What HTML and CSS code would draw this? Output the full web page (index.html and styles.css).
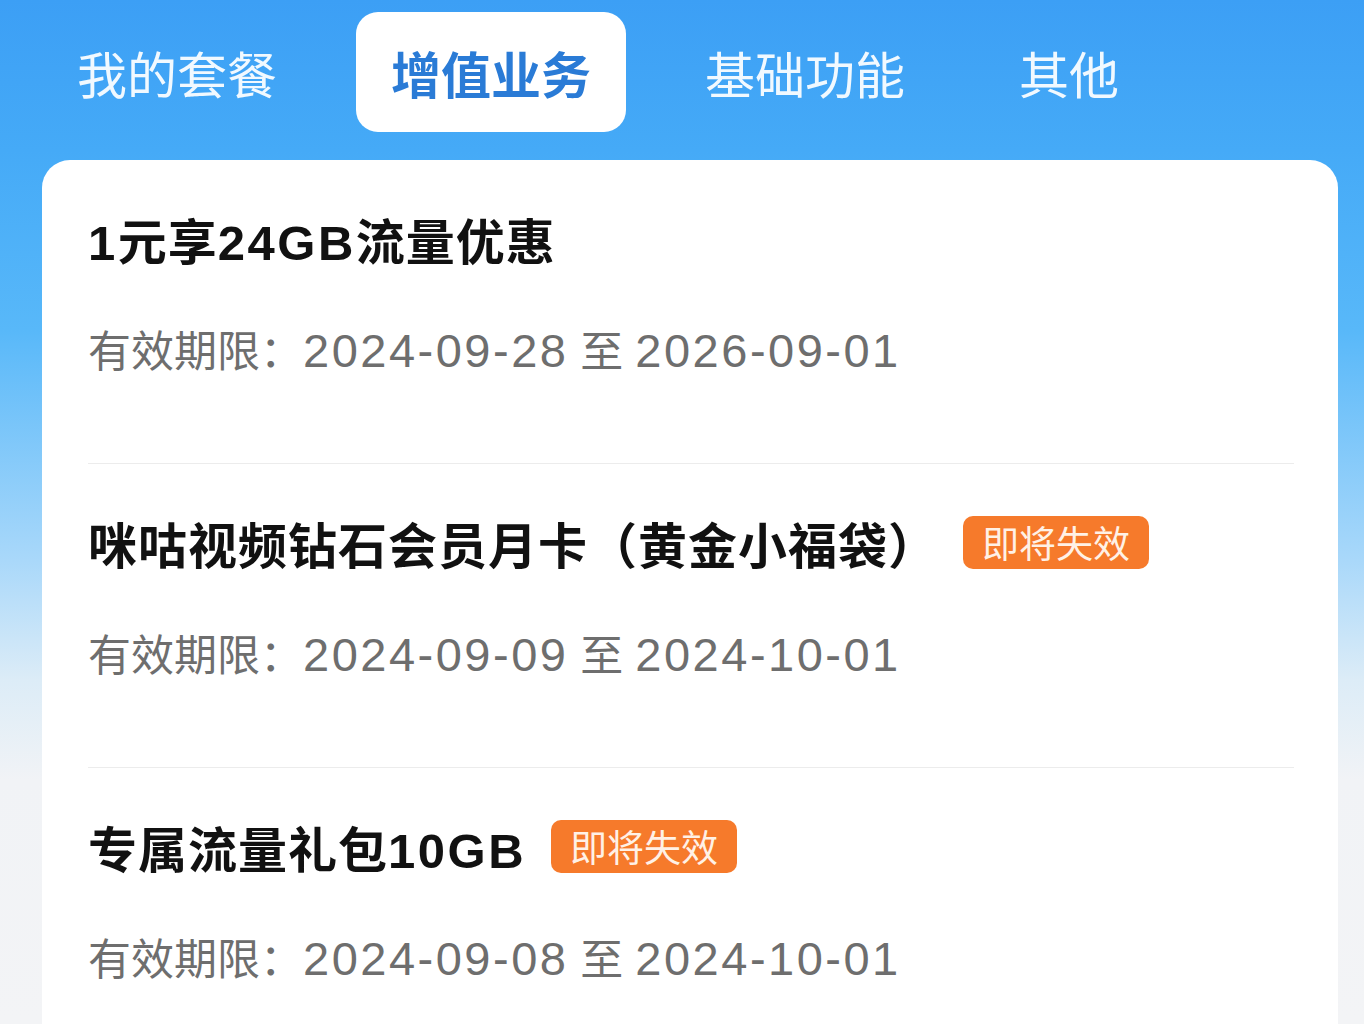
FILE: index.html
```html
<!DOCTYPE html>
<html lang="zh-CN">
<head>
<meta charset="utf-8">
<title>增值业务</title>
<link rel="stylesheet" href="styles.css">
</head>
<body>
<div class="page">
  <nav class="tabs">
    <div class="tab">我的套餐</div>
    <div class="tab tab-active">增值业务</div>
    <div class="tab">基础功能</div>
    <div class="tab">其他</div>
  </nav>
  <section class="card">
    <div class="item">
      <div class="title-row"><span class="title"><span class="en">1</span>元享<span class="en">24GB</span>流量优惠</span></div>
      <div class="date">有效期限：<span class="num">2024-09-28</span> 至 <span class="num">2026-09-01</span></div>
    </div>
    <div class="item">
      <div class="title-row"><span class="title">咪咕视频钻石会员月卡（黄金小福袋）</span><span class="badge">即将失效</span></div>
      <div class="date">有效期限：<span class="num">2024-09-09</span> 至 <span class="num">2024-10-01</span></div>
    </div>
    <div class="item">
      <div class="title-row"><span class="title">专属流量礼包<span class="en">10GB</span></span><span class="badge">即将失效</span></div>
      <div class="date">有效期限：<span class="num">2024-09-08</span> 至 <span class="num">2024-10-01</span></div>
    </div>
  </section>
</div>
</body>
</html>
```
FILE: styles.css
```css
html, body {
  margin: 0;
  padding: 0;
}
body {
  width: 1364px;
  height: 1024px;
  overflow: hidden;
  font-family: "Liberation Sans", "Noto Sans CJK SC", sans-serif;
  background: linear-gradient(180deg, #3c9ff5 0px, #45aaf7 150px, #58b8f9 330px, #a9d8fa 560px, #dcecf7 680px, #f1f3f6 780px, #f3f4f6 1024px);
}
.page {
  padding: 12px 26px 0 42px;
}
.tabs {
  display: flex;
  gap: 44px;
  height: 120px;
  margin-bottom: 28px;
}
.tab {
  padding: 0 35px;
  font-family: "Noto Sans CJK SC", sans-serif;
  font-size: 50px;
  line-height: 120px;
  color: rgba(255, 255, 255, 0.93);
  border-radius: 22px;
}
.tab-active {
  background: #ffffff;
  color: #2a7bd6;
  font-weight: 700;
}
.card {
  background: #ffffff;
  border-radius: 28px;
  padding: 0 44px 0 46px;
  height: 900px;
}
.item {
  padding: 54px 0 82px;
  border-bottom: 1px solid #ececec;
}
.title-row {
  display: flex;
  align-items: center;
  height: 58px;
}
.title {
  font-size: 49px;
  font-weight: 700;
  color: #111111;
  line-height: 58px;
  letter-spacing: 1px;
}
.en {
  letter-spacing: 2.5px;
}
.badge {
  margin-left: 25px;
  margin-bottom: 9px;
  height: 53px;
  padding: 0 19px;
  border-radius: 10px;
  background: #f67a2b;
  color: #fff1e6;
  font-family: "Noto Sans CJK SC", sans-serif;
  font-size: 37px;
  line-height: 53px;
}
.date {
  margin-top: 49px;
  height: 60px;
  line-height: 60px;
  font-size: 43px;
  color: #6e6e6e;
}
.num {
  font-size: 47px;
  letter-spacing: 2.5px;
}
```
